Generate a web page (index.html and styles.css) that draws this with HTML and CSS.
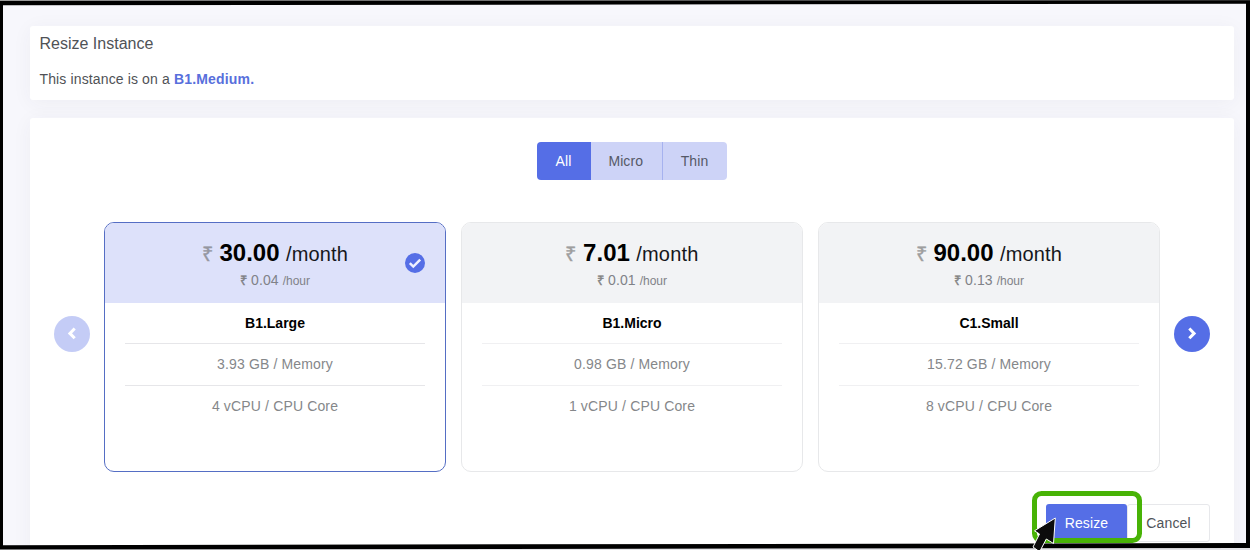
FILE: index.html
```html
<!DOCTYPE html>
<html lang="en">
<head>
<meta charset="utf-8">
<title>Resize Instance</title>
<link rel="stylesheet" href="styles.css">
</head>
<body>
<main class="page">
  <section class="panel intro">
    <h1 class="title">Resize Instance</h1>
    <p class="current">This instance is on a <strong>B1.Medium.</strong></p>
  </section>
  <section class="panel plans">
    <div class="tabs">
      <button class="tab tab-active">All</button>
      <button class="tab tab-micro">Micro</button>
      <button class="tab tab-thin">Thin</button>
    </div>
    <div class="carousel">
      <button class="nav nav-off" aria-label="Previous"><svg width="10" height="14" viewBox="0 0 10 14"><path d="M7.700 1.500 2.900 6.400 7.700 11.300"/></svg></button>
      <div class="cards">
        <article class="card selected">
          <header class="head">
            <p class="month"><span class="cur">₹</span> <b>30.00</b> /month</p>
            <p class="hour"><span class="cur">₹</span> 0.04 <small>/hour</small></p>
            <svg class="check" width="20" height="20" viewBox="0 0 20 20"><circle cx="10" cy="10" r="10"/><path d="m4.800 10.200 3.500 3.400 6.900-6.900"/></svg>
          </header>
          <ul class="specs"><li class="name">B1.Large</li><li>3.93 GB / Memory</li><li>4 vCPU / CPU Core</li></ul>
        </article>
        <article class="card">
          <header class="head">
            <p class="month"><span class="cur">₹</span> <b>7.01</b> /month</p>
            <p class="hour"><span class="cur">₹</span> 0.01 <small>/hour</small></p>
          </header>
          <ul class="specs"><li class="name">B1.Micro</li><li>0.98 GB / Memory</li><li>1 vCPU / CPU Core</li></ul>
        </article>
        <article class="card">
          <header class="head">
            <p class="month"><span class="cur">₹</span> <b>90.00</b> /month</p>
            <p class="hour"><span class="cur">₹</span> 0.13 <small>/hour</small></p>
          </header>
          <ul class="specs"><li class="name">C1.Small</li><li>15.72 GB / Memory</li><li>8 vCPU / CPU Core</li></ul>
        </article>
      </div>
      <button class="nav" aria-label="Next"><svg width="10" height="14" viewBox="0 0 10 14"><path d="M2.300 1.500 7.100 6.400 2.300 11.300"/></svg></button>
    </div>
    <div class="actions">
      <button class="btn btn-primary">Resize</button>
      <button class="btn btn-plain">Cancel</button>
    </div>
  </section>
</main>
<svg class="overlay" width="1250" height="550" viewBox="0 0 1250 550">
  <rect x="1034.5" y="493.5" width="105" height="47" rx="7" fill="none" stroke="#48b306" stroke-width="5"/>
  <path d="M0 0H1250V550H0ZM3 5.3V545.3L1246 543V3.7Z" fill="#000" fill-rule="evenodd"/>
  <path d="M0 0H1250V.3L0 1Z" fill="#9a9a9a"/>
  <path d="M0 550V549.6L1250 548V550Z" fill="#e4e4e8"/>
  <path d="M1055.300 518 1034.500 530.800 1039.500 534 1033 547 1038.500 551H1040L1046.300 539 1053.500 543.500Z" fill="#0c0c0c" stroke="#fff" stroke-width="1"/>
</svg>
</body>
</html>
```
FILE: styles.css
```css
* { box-sizing: border-box; }
body { margin: 0; height: 550px; overflow: hidden; background: #f7f7fc; color: #4f5256; font-family: "Liberation Sans", Arial, sans-serif; font-size: 14px; }
h1, p, ul { margin: 0; padding: 0; font-weight: 400; }
button { font: inherit; border: 0; padding: 0; }
.page { padding: 26px 16px 0 30px; display: flex; flex-direction: column; gap: 18px; }
.panel { background: #fff; border-radius: 3px; box-shadow: 0 3px 20px rgba(50, 50, 70, .05); }
.intro { height: 74px; padding: 8px 9.5px; }
.title { font-size: 16px; line-height: 20px; }
.current { margin-top: 16px; line-height: 18px; letter-spacing: .13px; }
.current strong { color: #586fdc; letter-spacing: .18px; }
.plans { height: 450px; padding: 24px; }
.tabs { display: flex; width: 190px; height: 38px; margin: 0 auto; border-radius: 4px; overflow: hidden; }
.tab { width: 71px; padding-right: 1.5px; letter-spacing: .1px; background: #cdd3f7; color: #555967; }
.tab-active { width: 54px; padding-right: 1px; background: #556ee6; color: #fff; }
.tab-thin { width: 65px; padding-right: 1px; border-left: 1px solid #a6b2ef; }
.carousel { display: flex; align-items: center; justify-content: space-between; margin-top: 42px; height: 250px; }
.nav { width: 36px; height: 36px; margin-top: -26px; border-radius: 50%; background: #556ee6; display: grid; place-items: center; }
.nav-off { background: #c4ccf6; }
.nav path { fill: none; stroke: #fff; stroke-width: 3; }
.cards { display: flex; gap: 15px; }
.card { width: 342px; height: 250px; border: 1px solid #e7e8ea; border-radius: 10px; overflow: hidden; text-align: center; }
.selected { border-color: #556ec4; }
.head { position: relative; height: 80px; padding-top: 16px; background: #f2f3f5; }
.selected .head { background: #dde1fa; }
.month { font-size: 20px; line-height: 28px; letter-spacing: .18px; word-spacing: .7px; color: #15171c; }
.month b { font-size: 24px; letter-spacing: 0; color: #000; }
.cur { opacity: .6; color: #666; -webkit-text-stroke: .4px #666; }
.hour { line-height: 17px; margin-top: 4px; letter-spacing: .1px; color: #808288; }
.hour .cur { font-size: 13px; opacity: .8; }
.hour small { font-size: 12px; letter-spacing: 0; }
.check { position: absolute; right: 20px; top: 30px; }
.check circle { fill: #556ee6; }
.check path { fill: none; stroke: #eef0ff; stroke-width: 2.5; }
.specs { list-style: none; padding: 0 20px; color: #85878a; letter-spacing: .15px; }
.specs li { height: 42px; line-height: 41px; border-bottom: 1px solid #f0f0f2; }
.selected .specs li { border-color: #e6e6e9; }
.specs li:last-child { border: 0; }
.specs .name { height: 41px; color: #000; font-weight: 700; letter-spacing: 0; }
.actions { display: flex; justify-content: flex-end; margin-top: 32px; }
.btn { height: 38px; border-radius: 3px; letter-spacing: .12px; }
.btn-primary { width: 81px; background: #556ee6; color: #fff; }
.btn-plain { width: 83px; background: #fff; border: 1px solid #e7e8eb; color: #505358; }
.overlay { position: absolute; left: 0; top: 0; pointer-events: none; }
```
